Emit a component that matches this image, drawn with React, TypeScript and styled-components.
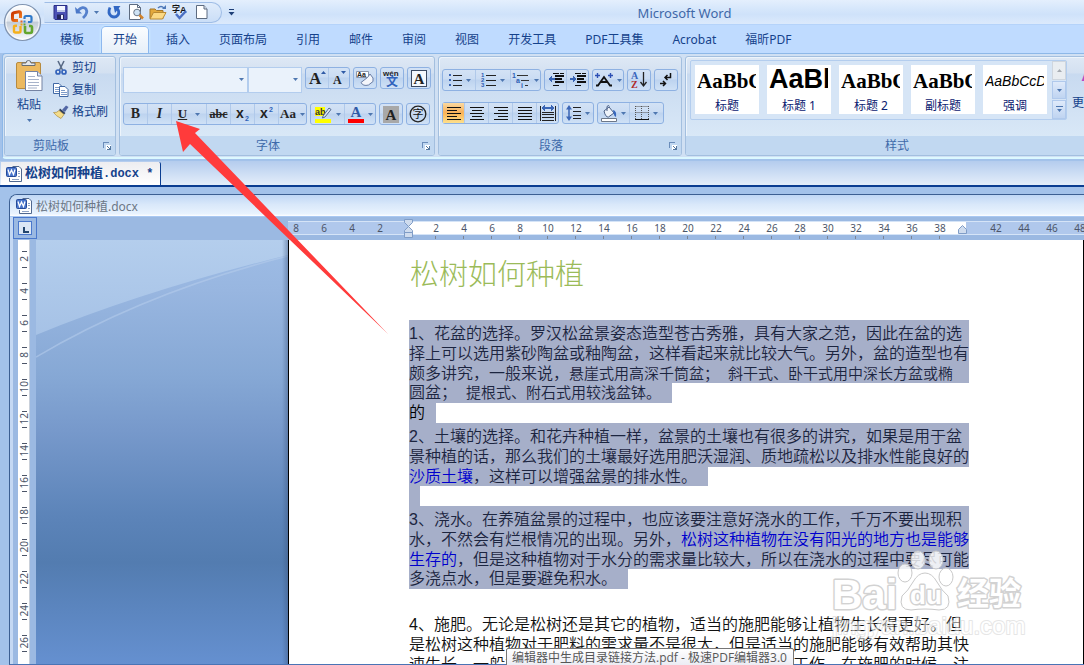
import React from 'react';
import styled, { createGlobalStyle, css } from 'styled-components';

const ui = `"Noto Sans", "Noto Sans CJK SC", sans-serif`;
const body = `"Liberation Sans", "Noto Sans CJK SC", sans-serif`;
const serif = `"Liberation Serif", "Noto Sans CJK SC", serif`;

const Global = createGlobalStyle`
  * { box-sizing: border-box; }
  body { margin: 0; font-family: ${ui}; font-size: 12px; color: #15428b; }
  button { font: inherit; color: inherit; border: 0; padding: 0; background: none; cursor: default; }
  p, h1 { margin: 0; }
  svg { display: block; flex: none; overflow: visible; }
`;

const Window = styled.div`
  position: relative;
  display: flex;
  flex-direction: column;
  height: 100vh;
  overflow: hidden;
  background: #a3c2ea;
`;

/* ---------- title bar ---------- */
const TitleBar = styled.header`
  display: flex;
  align-items: center;
  height: 25px;
  padding-left: 44px;
  background: linear-gradient(#e4effd 0, #d5e6fb 40%, #cfe2fa 60%, #dceafc 100%);
  border-bottom: 1px solid #b5d3fa;
`;
const QuickBar = styled.div`
  display: flex;
  align-items: center;
  width: 178px;
  height: 21px;
  padding-left: 8px;
  border: 1px solid #9fbde6;
  border-left-color: transparent;
  border-radius: 0 11px 11px 0;
  background: linear-gradient(#e0ecfb, #cadef7);
`;
const QuickButton = styled.button<{ $w: number }>`
  display: flex;
  width: ${(p) => p.$w}px;
  height: 18px;
  align-items: center;
`;
const Customize = styled.button`
  margin-left: 6px;
`;
const Caption = styled.div`
  flex: 1;
  padding-left: 50px;
  text-align: center;
  font-size: 13px;
  line-height: 20px;
  color: #4068a8;
  padding-top: 2px;
`;
const OfficeButton = styled.button`
  position: absolute;
  left: 2px;
  top: 2px;
`;

/* ---------- tabs ---------- */
const TabRow = styled.nav`
  display: flex;
  align-items: flex-end;
  gap: 7px;
  height: 28px;
  padding-left: 49px;
  background: #bfdbff;
`;
const Tab = styled.button<{ $on?: boolean }>`
  height: 26px;
  padding: 0 11px;
  line-height: 24px;
  white-space: nowrap;
  border-radius: 4px 4px 0 0;
  ${(p) =>
    p.$on &&
    css`
      background: linear-gradient(#fafdff, #e6eff9);
      box-shadow: 0 0 0 1px #8db8ef, 0 0 3px 1px #d8f4ff;
      clip-path: inset(-3px -3px 0 -3px);
    `}
`;

/* ---------- ribbon ---------- */
const Ribbon = styled.section`
  display: flex;
  gap: 3px;
  height: 106px;
  margin-left: 2px;
  padding: 2px 0 1px 1px;
  overflow: hidden;
  border: 1px solid #8db8e8;
  border-right: 0;
  border-bottom: 2px solid #dcf8ff;
  border-radius: 4px 0 0 4px;
  background: #d0e0f3;
`;
const GroupBox = styled.section<{ $w?: number }>`
  display: flex;
  flex-direction: column;
  flex: ${(p) => (p.$w ? `0 0 ${p.$w}px` : '1 0 442px')};
  min-width: 0;
  border: 1px solid #a3bfdf;
  border-radius: 3px;
  overflow: hidden;
  box-shadow: inset 1px 1px 0 #edf4fb;
  background: linear-gradient(#dee8f5 0, #d3e0f1 16px, #c8daf0 17px, #d9e8f7 80px);
`;
const GroupBody = styled.div`
  flex: 1;
  min-height: 0;
`;
const GroupLabel = styled.footer`
  display: flex;
  flex: none;
  align-items: center;
  height: 19px;
  padding-right: 4px;
  background: #c1d8f1;
  color: #3e6aaa;
  text-align: center;
`;
const LabelText = styled.span`
  flex: 1;
  padding-right: 6px;
  line-height: 19px;
`;

const ClipBody = styled(GroupBody)`
  display: flex;
  padding-left: 8px;
`;
const Paste = styled.button`
  display: flex;
  flex-direction: column;
  align-items: center;
  width: 32px;
  height: 70px;
  gap: 4px;
  padding-top: 3px;
  line-height: 20px;
`;
const ClipList = styled.div`
  margin-left: 8px;
`;
const ClipItem = styled.button`
  display: flex;
  align-items: center;
  gap: 3px;
  height: 22px;
  line-height: 20px;
  white-space: nowrap;
`;

const Rows = styled(GroupBody)<{ $top: number; $gap: number }>`
  display: flex;
  flex-direction: column;
  padding: ${(p) => p.$top}px 0 0 3px;
  gap: ${(p) => p.$gap}px;
`;
const Row = styled.div`
  display: flex;
  gap: 3px;
`;
const Combo = styled.label<{ $w: number }>`
  position: relative;
  width: ${(p) => p.$w}px;
  height: 26px;
  margin-right: -3px;
`;
const ComboSelect = styled.select`
  appearance: none;
  width: 100%;
  height: 100%;
  border: 1px solid #b3cdee;
  border-radius: 0;
  background: #eaf2fb;
`;
const ComboArrow = styled.span`
  position: absolute;
  right: 4px;
  top: 11px;
  pointer-events: none;
`;
const Buttons = styled.div`
  display: flex;
  height: 22px;
  border: 1px solid #8eb1e2;
  border-radius: 3px;
  background: linear-gradient(#d3e2f5 0, #cadcf3 45%, #bdd3ef 50%, #cfe1f6 100%);
`;
const Tool = styled.button<{ $w: number; $on?: boolean }>`
  display: flex;
  align-items: center;
  justify-content: center;
  gap: 4px;
  width: ${(p) => p.$w}px;
  height: 20px;
  color: #262626;
  background: ${(p) => (p.$on ? 'linear-gradient(#fbd9a0 0, #f8b25c 45%, #fbb85a 55%, #fde08c)' : 'none')};
  & + & { border-left: 1px solid #b0c9ea; }
`;
const Glyph = styled.span<{ $size: number; $italic?: boolean; $line?: string }>`
  font-family: ${serif};
  font-size: ${(p) => p.$size}px;
  line-height: 18px;
  font-weight: 700;
  font-style: ${(p) => (p.$italic ? 'italic' : 'normal')};
  text-decoration: ${(p) => p.$line ?? 'none'};
`;

/* ---------- styles gallery ---------- */
const StyleBody = styled(GroupBody)`
  display: flex;
  gap: 5px;
  padding: 3px 0 0 4px;
`;
const Gallery = styled.div`
  display: flex;
  flex: none;
  gap: 8px;
  height: 60px;
  padding: 4px 0 0 4px;
  border: 1px solid #b3cdee;
  border-radius: 2px;
  background: #d6e5f6;
`;
const Card = styled.button`
  display: flex;
  flex-direction: column;
  justify-content: space-between;
  width: 64px;
  height: 49px;
  background: #fff;
  color: #0b2070;
`;
const Sample = styled.span<{ $kind: 'serif' | 'big' | 'slant' }>`
  width: 59px;
  height: 32px;
  margin-left: 2px;
  overflow: hidden;
  text-align: left;
  white-space: nowrap;
  color: #000;
  ${(p) => p.$kind === 'serif' && css`font: 700 21px/32px ${serif};`}
  ${(p) => p.$kind === 'big' && css`font: 700 27px/28px ${body};`}
  ${(p) => p.$kind === 'slant' && css`font: italic 14px/32px ${body};`}
`;
const CardName = styled.span`
  width: 100%;
  line-height: 16px;
  text-align: center;
`;
const Scroll = styled.div`
  display: flex;
  flex-direction: column;
  gap: 1px;
  margin: -4px 0 0 -3px;
`;
const ScrollButton = styled.button<{ $off?: boolean }>`
  display: flex;
  align-items: center;
  justify-content: center;
  width: 14px;
  height: 19px;
  border: 1px solid ${(p) => (p.$off ? '#cfd6de' : '#b0c9ec')};
  background: ${(p) => (p.$off ? '#e9edf1' : 'linear-gradient(#dfeafa, #bfd4f1)')};
`;
const ChangeStyles = styled.button`
  flex: none;
  display: flex;
  flex-direction: column;
  height: 60px;
  line-height: 18px;
`;

/* ---------- file tab strip ---------- */
const FileStrip = styled.div`
  display: flex;
  align-items: flex-end;
  height: 26px;
  margin-top: 2px;
  padding-left: 1px;
  border-bottom: 2px solid #0b3d91;
  background: linear-gradient(#b4ccee, #e4eefa);
`;
const FileTab = styled.button`
  display: flex;
  align-items: center;
  gap: 2px;
  width: 160px;
  height: 23px;
  padding-left: 5px;
  border-right: 1px solid #0b3d91;
  border-radius: 0 2px 0 0;
  background: linear-gradient(#ededf0, #fff);
  font: 700 13px/20px "Liberation Mono", "Noto Sans CJK SC", monospace;
  white-space: nowrap;
`;
const Ext = styled.span`
  font-size: 12px;
`;

/* ---------- document window ---------- */
const DocWindow = styled.main`
  display: flex;
  flex: 1;
  min-height: 0;
  flex-direction: column;
  margin: 7px 0 0 9px;
  border: 1px solid #3c5f92;
  border-width: 1px 0 1px 1px;
  border-bottom-color: #4a74b5;
  border-radius: 8px 0 0 0;
  overflow: hidden;
  background: #c4d8f3;
`;
const DocTitle = styled.div`
  display: flex;
  flex: none;
  align-items: center;
  gap: 3px;
  height: 22px;
  padding-left: 6px;
  background: linear-gradient(#c0d7f5 0, #d9e8fa 45%, #e9f3fe 90%, #fff 100%);
  border-bottom: 1px solid #a9c8f2;
  color: #6b7786;
`;
const RulerRow = styled.div`
  display: flex;
  flex: none;
  height: 23px;
  margin-left: 3px;
  background: #9bb9e2;
`;
const TabStop = styled.button`
  display: flex;
  align-items: center;
  justify-content: center;
  width: 24px;
  height: 22px;
  border: 1px solid #4a78cc;
`;
const Ruler = styled.div`
  position: relative;
  display: flex;
  flex: 1;
  min-width: 0;
  margin-left: 251px;
  padding-top: 4px;
`;
const Scale = styled.div<{ $kind: 'left' | 'text' | 'right' }>`
  display: flex;
  height: 14px;
  flex: ${(p) => (p.$kind === 'right' ? '1 1 0' : p.$kind === 'left' ? '0 0 121px' : '0 0 557px')};
  min-width: 0;
  overflow: ${(p) => (p.$kind === 'text' ? 'visible' : 'hidden')};
  justify-content: ${(p) => (p.$kind === 'left' ? 'flex-end' : 'flex-start')};
  padding: ${(p) => (p.$kind === 'left' ? '0 15px 0 0' : p.$kind === 'text' ? '0 0 0 13px' : '0 0 0 16px')};
  border: solid #d5e4f7;
  border-width: 1px 0;
  background: ${(p) => (p.$kind === 'text' ? '#fff' : '#b0c8ec')};
`;
const Mark = styled.span<{ $tick?: boolean }>`
  position: relative;
  flex: 0 0 28px;
  text-align: center;
  font: 10px/12px "Noto Sans", sans-serif;
  color: #4c5568;
  ${(p) =>
    p.$tick &&
    css`
      &::after {
        content: '';
        position: absolute;
        left: 13px;
        top: 14px;
        width: 1px;
        height: 3px;
        background: #7b8494;
      }
    `}
`;
const Indent = styled.span<{ $x: number; $y: number }>`
  position: absolute;
  left: ${(p) => p.$x}px;
  top: ${(p) => p.$y}px;
`;
const Workspace = styled.div`
  display: flex;
  flex: 1;
  min-height: 0;
  margin-left: 3px;
`;
const SideRuler = styled.div`
  flex: 0 0 23px;
  overflow: hidden;
  padding: 0 6px 0 5px;
  background: #9bb9e2;
`;
const SideScale = styled.div`
  height: 100%;
  overflow: hidden;
  padding-top: 3px;
  background: #fff;
  border-right: 1px solid #c9d0da;
`;
const SideMark = styled.div`
  display: flex;
  align-items: center;
  justify-content: center;
  height: 32px;
  position: relative;
  font: 10px/12px "Noto Sans", sans-serif;
  color: #4c5568;
  &::before, &::after {
    content: '';
    position: absolute;
    left: 4px;
    width: 5px;
    height: 1px;
    background: #4c5568;
  }
  &::before { top: 8px; }
  &::after { bottom: 7px; }
`;
const Turned = styled.span`
  writing-mode: vertical-rl;
  transform: rotate(180deg);
`;
const Backdrop = styled.div`
  position: relative;
  flex: 0 0 252px;
  overflow: hidden;
  background: linear-gradient(#9ebde6 0, #98b6e0 12%, #86a8d5 32%, #7799cb 45%, #5c84b9 65%, #537cb0 76%, #6590d0 100%);
  &::after {
    content: '';
    position: absolute;
    inset: 0 0 0 auto;
    width: 6px;
    background: linear-gradient(90deg, rgba(60, 85, 125, 0), rgba(60, 85, 125, 0.45));
  }
`;
const Page = styled.article`
  position: relative;
  flex: 1;
  min-width: 0;
  overflow: hidden;
  padding: 15px 0 0 120px;
  border: solid #000;
  border-width: 0 1px;
  background: #fff;
  font-family: ${body};
  font-size: 16px;
  font-weight: 350;
`;
const Heading = styled.h1`
  padding-left: 1px;
  font-size: 29px;
  font-weight: 300;
  line-height: 40px;
  color: #9bbb59;
  margin-bottom: 25px;
`;
const Para = styled.p<{ $gap?: number; $plain?: boolean }>`
  margin-top: ${(p) => p.$gap ?? 0}px;
  color: ${(p) => (p.$plain ? '#111' : '#1c2540')};
`;
const Line = styled.span<{ $full?: boolean; $plain?: boolean }>`
  display: block;
  width: ${(p) => (p.$full ? '560px' : 'fit-content')};
  padding: 0 ${(p) => (p.$full ? 0 : 11)}px 0 0;
  height: 20px;
  line-height: 20px;
  white-space: nowrap;
  background: ${(p) => (p.$plain ? 'none' : '#a6afc9')};
  &:first-child { height: 24px; padding-top: 4px; }
  &:nth-child(3) { height: 19px; }
`;
const Tight = styled.span`
  font-size: 15px;
`;
const Blue = styled.span`
  color: #0000cd;
`;
const Black = styled.span`
  color: #000;
`;

/* ---------- overlays ---------- */
const Watermark = styled.div`
  position: absolute;
  left: 832px;
  top: 548px;
`;
const MarkText = styled.text`
  fill: #fff;
  stroke: #d2d2d2;
  stroke-width: 3px;
  stroke-linejoin: round;
  paint-order: stroke;
  font-family: ${body};
`;
const MarkLink = styled(MarkText)`
  stroke-width: 2px;
  opacity: 0.55;
`;
const Hint = styled.div`
  position: absolute;
  left: 506px;
  bottom: -3px;
  height: 20px;
  padding: 0 6px 0 5px;
  border: 1px solid #767676;
  border-radius: 2px;
  background: linear-gradient(#fff, #e9eaf2);
  font-family: "Open Sans", "Noto Sans CJK SC", sans-serif;
  line-height: 18px;
  color: #575757;
  white-space: nowrap;
`;
const Pointer = styled.svg`
  position: absolute;
  left: 176px;
  top: 121px;
  pointer-events: none;
`;

/* ---------- icons ---------- */
const Arrow = ({ c = '#4e77b0' }: { c?: string }) => (
  <svg width="5" height="3" viewBox="0 0 5 3"><path d="M0 0h5L2.5 3z" fill={c} /></svg>
);
const Launcher = () => (
  <svg width="8" height="8" viewBox="0 0 8 8" shapeRendering="crispEdges">
    <path d="M0 6V0h6v1H1v5z" fill="#6a8cba" />
    <path d="M3 3h5v5H3z" fill="#fff" />
    <path d="M4 4h1v1h1v1h1V4h1v4H4V7h2V6H5V5H4z" fill="#54779f" />
  </svg>
);
const OfficeLogo = () => (
  <svg width="40" height="40" viewBox="0 0 40 40">
    <defs>
      <linearGradient id="orb" x1="0" y1="0" x2="0" y2="1">
        <stop offset="0" stopColor="#fff" /><stop offset=".45" stopColor="#e3e8ef" />
        <stop offset=".5" stopColor="#c3ccd8" /><stop offset="1" stopColor="#fbfcfe" />
      </linearGradient>
      <linearGradient id="flame" x1="0" y1="0" x2="1" y2="1">
        <stop offset="0" stopColor="#c93400" /><stop offset="1" stopColor="#f58220" />
      </linearGradient>
    </defs>
    <circle cx="20.500" cy="20.500" r="18" fill="url(#orb)" stroke="#7f93b0" strokeWidth="1.200" />
    <circle cx="20.500" cy="20.500" r="16.500" fill="none" stroke="#fff" opacity=".8" />
    <g fill="none" strokeLinejoin="round">
      <path d="M16 18.500h-3.500q-2 0-2-2v-4q0-1.500 1.500-1.800l5-.9q1.500 0 1.500 1.500V16" stroke="url(#flame)" strokeWidth="3" />
      <path d="M22.500 17v-1.500q0-1.500 1.500-1.500h4q1.500 0 1.500 1.500V19q0 1-1 1H26" stroke="#2f79c9" strokeWidth="2.200" />
      <path d="M18.500 24v5q0 1.500-1.500 1.500h-3.500q-1.500 0-1.500-1.500v-4q0-1.200 1.500-1.200H15" stroke="#f5b01c" strokeWidth="2.400" />
      <path d="M23 24v5.500q0 1.500 1.500 1.500H28q2 0 2-2v-3.500q0-1.500-1.500-1.500H27" stroke="#63a62f" strokeWidth="2.600" />
    </g>
    <path d="M18.500 18.500h2v2h-2z" fill="#e2622a" /><path d="M21.500 18.500h2v2h-2z" fill="#3c85d0" />
    <path d="M18.500 21.500h2v2h-2z" fill="#f0a318" /><path d="M21.500 21.500h2v2h-2z" fill="#63a62f" />
  </svg>
);
const Save = () => (
  <svg width="15" height="15" viewBox="0 0 15 15">
    <path d="M1 .5h13v14H2l-1-1z" fill="#4a51b5" stroke="#2a2f86" />
    <path d="M4 1h8v6H4z" fill="#f3f6ff" /><path d="M4 5h8v2H4z" fill="#bcc7ea" />
    <path d="M4 9.500h7V14H4z" fill="#23275e" /><path d="M8 10h2v4H8z" fill="#e6e9fa" />
  </svg>
);
const Undo = () => (
  <svg width="15" height="15" viewBox="0 0 15 15">
    <path d="M3 5.500Q8 .5 11 4q2.500 4-3 9" fill="none" stroke="#5580cc" strokeWidth="2.800" />
    <path d="M0 2 7 8.500H1z" fill="#4b78c8" />
  </svg>
);
const Redo = () => (
  <svg width="15" height="15" viewBox="0 0 15 15">
    <path d="M3 2.500Q.5 8 4 11q4 2.500 7-1 2-3.500-1-6.500" fill="none" stroke="#3268c4" strokeWidth="2.800" />
    <path d="M6.500 1h7L8 8z" fill="#3268c4" />
  </svg>
);
const Preview = () => (
  <svg width="17" height="16" viewBox="0 0 17 16">
    <path d="M1.500.5h8l3 3v12h-11z" fill="#fff" stroke="#5d6b80" /><path d="M9.500.5v3h3" fill="none" stroke="#5d6b80" />
    <circle cx="9" cy="8.500" r="3.300" fill="#cfe3f5" stroke="#6b7787" />
    <path d="m11.500 11 3.500 3.500" stroke="#d2822a" strokeWidth="2.500" />
  </svg>
);
const Folder = () => (
  <svg width="18" height="15" viewBox="0 0 18 15">
    <path d="M1 4h5l1.500 1.500H14v8H1z" fill="#e3a93c" stroke="#a3762a" />
    <path d="M1 14 4.500 7.500H17L13.500 14z" fill="#fbd984" stroke="#b98a34" />
    <path d="M9 3q3-3 6 0" fill="none" stroke="#4d78b8" strokeWidth="1.400" /><path d="M13 4h4V0z" fill="#4d78b8" />
  </svg>
);
const Spell = () => (
  <svg width="17" height="16" viewBox="0 0 17 16">
    <text x="0" y="8" fontSize="8" fontWeight="700" fill="#111" fontFamily="Noto Sans CJK SC">字</text>
    <text x="8" y="9" fontSize="9" fontWeight="700" fill="#111" fontFamily="Liberation Sans">A</text>
    <path d="m4 10 3.500 4L14 7" fill="none" stroke="#4b70c4" strokeWidth="2.500" />
  </svg>
);
const NewDoc = () => (
  <svg width="12" height="14" viewBox="0 0 12 14">
    <path d="M.5.500h7.500l3 3.500v9.500H.5z" fill="#fff" stroke="#5d6b80" /><path d="M8 .5V4h3" fill="#dde5ef" stroke="#5d6b80" />
  </svg>
);
const PasteIcon = () => (
  <svg width="27" height="31" viewBox="0 0 27 31">
    <rect x=".5" y="2.500" width="24" height="26" rx="1.500" fill="#ecb95f" stroke="#b78a3e" />
    <path d="M6 5.500h13V3h-4q0-2.500-2.500-2.500T10 3H6z" fill="#e3e6ea" stroke="#666d76" />
    <path d="M9.500 11.500h12l4.500 4.500v14.500H9.500z" fill="#fff" stroke="#7583a3" />
    <path d="M21.500 11.500V16H26" fill="#dfe6f2" stroke="#7583a3" />
    <path d="M12 16.500h7M12 19.500h11M12 22.500h11M12 25.500h11M12 28h9" stroke="#a7b3ca" />
  </svg>
);
const Cut = () => (
  <svg width="16" height="16" viewBox="0 0 16 16" fill="none">
    <path d="M5 1 9.500 10M11 1 6.500 10" stroke="#5b6c87" strokeWidth="1.600" />
    <circle cx="5" cy="12" r="2" stroke="#3463bb" strokeWidth="1.700" /><circle cx="11" cy="12" r="2" stroke="#3463bb" strokeWidth="1.700" />
  </svg>
);
const Copy = () => (
  <svg width="16" height="14" viewBox="0 0 16 14" fill="#fff" stroke="#4068a5">
    <path d="M.5.500H6L8.500 3v7.500h-8z" /><path d="M2 4.500h4M2 6.500h4M2 8.500h4" stroke="#7d9bc9" />
    <path d="M6.500 3.500h5.500l3 3v7h-8.500z" /><path d="M8 7.500h4M8 9.500h6M8 11.500h6" stroke="#7d9bc9" />
  </svg>
);
const Brush = () => (
  <svg width="16" height="14" viewBox="0 0 16 14">
    <path d="m9 5 4-4.500L15.500 2 12 7z" fill="#5166a5" /><path d="m7 3.500 5.500 4.500-1.500 1.500L6 5.500z" fill="#30405f" />
    <path d="M6 5.500 11 9.500 8 13.500Q3 11 .5 7.500 4 8 6 5.500z" fill="#f4dc8a" stroke="#a98b3f" strokeWidth=".7" />
  </svg>
);
const WordIcon = () => (
  <svg width="17" height="16" viewBox="0 0 17 16">
    <path d="M6.500.5H13L15.500 3v12.500h-12V12" fill="#fff" stroke="#50688f" /><path d="M12 5.500h2M12 7.500h2M6 13.500h7M12 10.500h2" stroke="#8fa3c5" />
    <rect x=".5" y="1.500" width="10" height="9" rx="1" fill="#4a76cc" stroke="#254a98" />
    <path d="m2 3.500 1.500 5 2-4.500 2 4.500 1.500-5" fill="none" stroke="#fff" strokeWidth="1.300" />
  </svg>
);
const Eraser = () => (
  <svg width="18" height="18" viewBox="0 0 18 18">
    <path d="M.5 2.500h12v6H.5z" fill="#fff" stroke="#8a97ad" />
    <text x="1" y="8" fontSize="7" fontWeight="700" fill="#222" fontFamily="Liberation Sans">Aa</text>
    <path d="m5 13.500 6.500-5L14 5l3 4v3.500L12.500 16Q7 17.500 5 13.500z" fill="#f4f6fb" stroke="#697da5" />
  </svg>
);
const Phonetic = () => (
  <svg width="18" height="18" viewBox="0 0 18 18">
    <text x="0" y="7" fontSize="8" fontWeight="700" fill="#222" fontFamily="Liberation Sans">wén</text>
    <text x="3" y="17" fontSize="12" fontWeight="700" fill="#3163bd" fontFamily="Noto Sans CJK SC">文</text>
  </svg>
);
const BoxedA = ({ shaded }: { shaded?: boolean }) => (
  <svg width="16" height="17" viewBox="0 0 16 17">
    <rect x=".5" y=".5" width="15" height="16" fill={shaded ? '#a8a8a8' : '#f4f8fd'} stroke={shaded ? '#a8a8a8' : '#3b4a63'} />
    <text x="8" y="14" textAnchor="middle" fontSize="15" fontWeight="700" fill="#222" fontFamily="Liberation Serif">A</text>
  </svg>
);
const CircledZi = () => (
  <svg width="18" height="18" viewBox="0 0 18 18">
    <circle cx="9" cy="9" r="7.800" fill="none" stroke="#222" strokeWidth="1.300" />
    <text x="9" y="13" textAnchor="middle" fontSize="11" fill="#111" fontFamily="Noto Sans CJK SC">字</text>
  </svg>
);
const Script = ({ up }: { up?: boolean }) => (
  <svg width="14" height="14" viewBox="0 0 14 14">
    <text x="0" y="11" fontSize="14" fontWeight="700" fill="#222" fontFamily="Liberation Sans">x</text>
    <text x="9" y={up ? 5 : 14} fontSize="7" fontWeight="700" fill="#2f62b8" fontFamily="Liberation Sans">2</text>
  </svg>
);
const Highlight = () => (
  <svg width="17" height="17" viewBox="0 0 17 17">
    <path d="M0 1h10v9H0zM0 13h16v4H0z" fill="#ffff00" />
    <text x="0" y="9" fontSize="9" fontWeight="700" fill="#333" fontFamily="Liberation Sans">ab</text>
    <path d="m8 10 6-8 2 1.500-6 7.500-2.500 1z" fill="#dfe7f4" stroke="#50688f" />
  </svg>
);
const FontColor = () => (
  <svg width="16" height="17" viewBox="0 0 16 17">
    <text x="8" y="11" textAnchor="middle" fontSize="15" fontWeight="700" fill="#2f5aa6" fontFamily="Liberation Serif">A</text>
    <path d="M0 13h16v4H0z" fill="#f00" />
  </svg>
);
const Bullets = () => (
  <svg width="14" height="14" viewBox="0 0 14 14" shapeRendering="crispEdges">
    <path d="M1 1h2v2H1zM1 6h2v2H1zM1 11h2v2H1z" fill="#3a65b5" /><path d="M5 2h9v1H5zM5 7h9v1H5zM5 12h9v1H5z" fill="#222" />
  </svg>
);
const Numbers = () => (
  <svg width="15" height="16" viewBox="0 0 15 16">
    <g fontSize="6" fontWeight="700" fill="#2c5cb4" fontFamily="Liberation Sans"><text x="0" y="5">1</text><text x="0" y="10">2</text><text x="0" y="15">3</text></g>
    <path d="M5 3.500h10M5 8.500h10M5 13.500h10" stroke="#222" />
  </svg>
);
const Multi = () => (
  <svg width="18" height="17" viewBox="0 0 18 17">
    <g fontSize="7" fontWeight="700" fill="#2c5cb4" fontFamily="Liberation Sans"><text x="0" y="6">1</text><text x="4" y="11">a</text><text x="9" y="16">i</text></g>
    <path d="M5 3.500h11M9 8.500h8M13 13.500h3" stroke="#333" />
  </svg>
);
const IndentIcon = ({ right }: { right?: boolean }) => (
  <svg width="16" height="14" viewBox="0 0 16 14" shapeRendering="crispEdges">
    <path d="M5 0h6v1H5zM5 12h6v1H5zM7 2h9v2H7zM7 5h7v2H7zM7 8h9v2H7zM12 0h4v1h-4z" fill="#111" />
    <path d={right ? 'M0 5h3V3l4 3-4 3V7H0z' : 'M7 5H4V3L0 6l4 3V7h3z'} fill="#3a65b5" />
  </svg>
);
const AsianLayout = () => (
  <svg width="18" height="14" viewBox="0 0 18 14" fill="none">
    <path d="M1 12.500h2L9 4l6 8.500h2M5 9h8" stroke="#111" strokeWidth="1.800" />
    <path d="M2.500 0v5M0 2.500h5M15.500 0v5M13 2.500h5" stroke="#2c4fb4" strokeWidth="1.400" />
  </svg>
);
const Sort = () => (
  <svg width="17" height="18" viewBox="0 0 17 18">
    <text x="0" y="8" fontSize="10" fontWeight="700" fill="#3b66bd" fontFamily="Liberation Serif">A</text>
    <text x="0" y="17" fontSize="10" fontWeight="700" fill="#b02a2a" fontFamily="Liberation Serif">Z</text>
    <path d="M12.500 1v13M9.500 11l3 4 3-4" fill="none" stroke="#222" strokeWidth="1.300" />
  </svg>
);
const Marks = () => (
  <svg width="12" height="14" viewBox="0 0 12 14" fill="none" stroke="#111" strokeWidth="1.500">
    <path d="M10.500 0v4.500H5M7.500 2 5 4.500 7.500 7M0 10.500h5M3 8l2.500 2.500L3 13" />
  </svg>
);
const Align = ({ kind }: { kind: 'l' | 'c' | 'r' | 'j' }) => {
  const widths = kind === 'j' ? [14, 14, 14, 14, 14] : [14, 10, 14, 10, 14];
  return (
    <svg width="14" height="13" viewBox="0 0 14 13" shapeRendering="crispEdges">
      {widths.map((w, i) => (
        <rect key={i} x={kind === 'r' ? 14 - w : kind === 'c' ? (14 - w) / 2 : 0} y={i * 3} width={w} height="1" fill="#111" />
      ))}
    </svg>
  );
};
const Distribute = () => (
  <svg width="16" height="17" viewBox="0 0 16 17" shapeRendering="crispEdges">
    <path d="M0 1h1v15H0zM15 1h1v15h-1zM2 7h12v1H2zM2 9h12v1H2zM2 12h12v1H2zM2 15h12v1H2z" fill="#222" />
    <path d="M1 3l4-3v2h6V0l4 3-4 3V4H5v2z" fill="#3a65b5" />
  </svg>
);
const Spacing = () => (
  <svg width="15" height="16" viewBox="0 0 15 16">
    <path d="M3 3v10" stroke="#3a65b5" strokeWidth="1.500" /><path d="M0 4.500 3 0l3 4.500zM0 11.500 3 16l3-4.500z" fill="#3a65b5" />
    <path d="M7 2.500h8M7 6.500h8M7 10.500h8M7 13.500h8" stroke="#222" />
  </svg>
);
const Bucket = () => (
  <svg width="16" height="17" viewBox="0 0 16 17">
    <path d="m3 6 5-4 5 6-5.500 4q-3 .5-4.500-6z" fill="#eef3fa" stroke="#4a5f85" /><path d="M6 6V1.500q2-2 2.500 0" fill="none" stroke="#4a5f85" />
    <path d="M12 5q4 1 3 7-2-1-2.500-4z" fill="#3767bd" /><path d="M.5 13.500h15v3H.5z" fill="#fff" stroke="#6c7788" />
  </svg>
);
const Borders = () => (
  <svg width="14" height="14" viewBox="0 0 14 14">
    <path d="M.5.500h13M.5 6.500h13M.5 0v13M6.500 0v13M13.500 0v13" stroke="#555" strokeDasharray="1 1" /><path d="M0 13.500h14" stroke="#111" />
  </svg>
);

const styles: { sample: string; name: string; kind: 'serif' | 'big' | 'slant' }[] = [
  { sample: 'AaBbC', name: '标题', kind: 'serif' },
  { sample: 'AaBb', name: '标题 1', kind: 'big' },
  { sample: 'AaBbC', name: '标题 2', kind: 'serif' },
  { sample: 'AaBbC', name: '副标题', kind: 'serif' },
  { sample: 'AaBbCcD', name: '强调', kind: 'slant' },
];
const tabs = ['模板', '开始', '插入', '页面布局', '引用', '邮件', '审阅', '视图', '开发工具', 'PDF工具集', 'Acrobat', '福昕PDF'];
const evens = (from: number, to: number) => Array.from({ length: (to - from) / 2 + 1 }, (_, i) => from + i * 2);

const Group = ({ label, width, children }: { label: string; width?: number; children: React.ReactNode }) => (
  <GroupBox $w={width} aria-label={label}>
    {children}
    <GroupLabel>
      <LabelText>{label}</LabelText>
      <button aria-label={`${label}选项`}><Launcher /></button>
    </GroupLabel>
  </GroupBox>
);

export default function App() {
  return (
    <Window>
      <Global />
      <TitleBar>
        <QuickBar>
          <QuickButton $w={22} aria-label="保存"><Save /></QuickButton>
          <QuickButton $w={19} aria-label="撤销"><Undo /></QuickButton>
          <QuickButton $w={13} aria-label="撤销列表"><Arrow /></QuickButton>
          <QuickButton $w={21} aria-label="恢复"><Redo /></QuickButton>
          <QuickButton $w={21} aria-label="打印预览"><Preview /></QuickButton>
          <QuickButton $w={23} aria-label="打开"><Folder /></QuickButton>
          <QuickButton $w={24} aria-label="拼写检查"><Spell /></QuickButton>
          <QuickButton $w={16} aria-label="新建"><NewDoc /></QuickButton>
        </QuickBar>
        <Customize aria-label="自定义快速访问工具栏">
          <svg width="7" height="7" viewBox="0 0 7 7"><path d="M1 0h5v1H1zM.5 3h6l-3 3.500z" fill="#1e3f78" /></svg>
        </Customize>
        <Caption>Microsoft Word</Caption>
      </TitleBar>
      <TabRow>
        {tabs.map((t) => <Tab key={t} $on={t === '开始'}>{t}</Tab>)}
      </TabRow>
      <OfficeButton aria-label="Office"><OfficeLogo /></OfficeButton>

      <Ribbon>
        <Group label="剪贴板" width={112}>
          <ClipBody>
            <Paste><PasteIcon />粘贴<Arrow /></Paste>
            <ClipList>
              <ClipItem><Cut />剪切</ClipItem>
              <ClipItem><Copy />复制</ClipItem>
              <ClipItem><Brush />格式刷</ClipItem>
            </ClipList>
          </ClipBody>
        </Group>

        <Group label="字体" width={316}>
          <Rows $top={10} $gap={10}>
            <Row>
              <Combo $w={125}><ComboSelect aria-label="字体" /><ComboArrow><Arrow /></ComboArrow></Combo>
              <Combo $w={54}><ComboSelect aria-label="字号" /><ComboArrow><Arrow /></ComboArrow></Combo>
              <span />
              <Buttons>
                <Tool $w={22} aria-label="增大字体">
                  <svg width="17" height="16" viewBox="0 0 17 16"><text x="0" y="14" fontSize="17" fontWeight="700" fill="#222" fontFamily="Liberation Serif">A</text><path d="M12 4h5l-2.500-3z" fill="#2f5aa6" /></svg>
                </Tool>
                <Tool $w={21} aria-label="缩小字体">
                  <svg width="15" height="16" viewBox="0 0 15 16"><text x="1" y="14" fontSize="12" fontWeight="700" fill="#222" fontFamily="Liberation Serif">A</text><path d="M9 1h5l-2.500 3z" fill="#2f5aa6" /></svg>
                </Tool>
              </Buttons>
              <Buttons><Tool $w={22} aria-label="清除格式"><Eraser /></Tool></Buttons>
              <Buttons><Tool $w={22} aria-label="拼音指南"><Phonetic /></Tool></Buttons>
              <Buttons><Tool $w={22} aria-label="字符边框"><BoxedA /></Tool></Buttons>
            </Row>
            <Row>
              <Buttons>
                <Tool $w={23}><Glyph $size={14}>B</Glyph></Tool>
                <Tool $w={24}><Glyph $size={14} $italic>I</Glyph></Tool>
                <Tool $w={35}><Glyph $size={13} $line="underline">U</Glyph><span /><Arrow /></Tool>
                <Tool $w={24}><Glyph $size={12} $line="line-through">abc</Glyph></Tool>
                <Tool $w={24} aria-label="下标"><Script /></Tool>
                <Tool $w={24} aria-label="上标"><Script up /></Tool>
                <Tool $w={28}><Glyph $size={13}>Aa</Glyph><Arrow /></Tool>
              </Buttons>
              <Buttons>
                <Tool $w={33} aria-label="突出显示"><Highlight /><Arrow /></Tool>
                <Tool $w={31} aria-label="字体颜色"><FontColor /><Arrow /></Tool>
              </Buttons>
              <Buttons><Tool $w={22} aria-label="字符底纹"><BoxedA shaded /></Tool></Buttons>
              <Buttons><Tool $w={22} aria-label="带圈字符"><CircledZi /></Tool></Buttons>
            </Row>
          </Rows>
        </Group>

        <Group label="段落" width={244}>
          <Rows $top={12} $gap={11}>
            <Row>
              <Buttons>
                <Tool $w={32} aria-label="项目符号"><Bullets /><Arrow /></Tool>
                <Tool $w={35} aria-label="编号"><Numbers /><Arrow /></Tool>
                <Tool $w={30} aria-label="多级列表"><Multi /><Arrow /></Tool>
              </Buttons>
              <Buttons>
                <Tool $w={21} aria-label="减少缩进"><IndentIcon /></Tool>
                <Tool $w={22} aria-label="增加缩进"><IndentIcon right /></Tool>
              </Buttons>
              <Buttons><Tool $w={30} aria-label="中文版式"><AsianLayout /><Arrow /></Tool></Buttons>
              <Buttons><Tool $w={22} aria-label="排序"><Sort /></Tool></Buttons>
              <Buttons><Tool $w={22} aria-label="显示标记"><Marks /></Tool></Buttons>
            </Row>
            <Row>
              <Buttons>
                <Tool $w={21} $on aria-label="左对齐"><Align kind="l" /></Tool>
                <Tool $w={24} aria-label="居中"><Align kind="c" /></Tool>
                <Tool $w={24} aria-label="右对齐"><Align kind="r" /></Tool>
                <Tool $w={24} aria-label="两端对齐"><Align kind="j" /></Tool>
                <Tool $w={22} aria-label="分散对齐"><Distribute /></Tool>
              </Buttons>
              <Buttons><Tool $w={30} aria-label="行距"><Spacing /><Arrow /></Tool></Buttons>
              <Buttons>
                <Tool $w={31} aria-label="底纹"><Bucket /><Arrow /></Tool>
                <Tool $w={34} aria-label="框线"><Borders /><Arrow /></Tool>
              </Buttons>
            </Row>
          </Rows>
        </Group>

        <Group label="样式">
          <StyleBody>
            <Gallery>
              {styles.map((s) => (
                <Card key={s.name}>
                  <Sample $kind={s.kind}>{s.sample}</Sample>
                  <CardName>{s.name}</CardName>
                </Card>
              ))}
              <Scroll>
                <ScrollButton $off aria-label="上一行"><svg width="5" height="3" viewBox="0 0 5 3"><path d="M0 3h5L2.500 0z" fill="#a6abb2" /></svg></ScrollButton>
                <ScrollButton aria-label="下一行"><Arrow /></ScrollButton>
                <ScrollButton aria-label="其他"><svg width="7" height="7" viewBox="0 0 7 7"><path d="M0 0h7v1H0zM1 3h5L3.500 6z" fill="#4e77b0" /></svg></ScrollButton>
              </Scroll>
            </Gallery>
            <ChangeStyles>
              <svg width="48" height="34" viewBox="0 0 48 34"><text x="9" y="21" fontSize="28" fontWeight="700" fill="#b946c4" fontFamily="Liberation Sans">A</text></svg>
              更改样式
            </ChangeStyles>
          </StyleBody>
        </Group>
      </Ribbon>

      <FileStrip>
        <FileTab><WordIcon /><span>松树如何种植<Ext>.docx *</Ext></span></FileTab>
      </FileStrip>

      <DocWindow>
        <DocTitle><WordIcon />松树如何种植.docx</DocTitle>
        <RulerRow>
          <TabStop aria-label="制表符">
            <svg width="14" height="14" viewBox="0 0 14 14"><rect x=".5" y=".5" width="13" height="13" fill="#dce7f5" stroke="#4a78cc" /><path d="M5 6h2v4h4v2H5z" fill="#24476f" /></svg>
          </TabStop>
          <Ruler>
            <Scale $kind="left">{[8, 6, 4, 2].map((n) => <Mark key={n}>{n}</Mark>)}</Scale>
            <Scale $kind="text">{evens(2, 38).map((n) => <Mark key={n} $tick>{n}</Mark>)}</Scale>
            <Scale $kind="right">{evens(42, 48).map((n) => <Mark key={n}>{n}</Mark>)}</Scale>
            <Indent $x={116} $y={2}>
              <svg width="9" height="20" viewBox="0 0 9 20" fill="#cfdcee" stroke="#7f9cc6">
                <path d="M.5.500h8v3l-4 4-4-4zM.5 13.500v-2l4-4 4 4v2zM.5 13.500h8v5h-8z" />
              </svg>
            </Indent>
            <Indent $x={670} $y={8}>
              <svg width="9" height="9" viewBox="0 0 9 9" fill="#cfdcee" stroke="#7f9cc6"><path d="M.5 8.500v-4l4-4 4 4v4z" /></svg>
            </Indent>
          </Ruler>
        </RulerRow>
        <Workspace>
          <SideRuler>
            <SideScale>{evens(2, 28).map((n) => <SideMark key={n}><Turned>{n}</Turned></SideMark>)}</SideScale>
          </SideRuler>
          <Backdrop>
            <svg width="252" height="130" viewBox="0 0 252 130">
              <defs>
                <linearGradient id="sky" x1="0" y1="0" x2="0" y2="1">
                  <stop offset="0" stopColor="#b4ceed" /><stop offset="1" stopColor="#a6c2e6" />
                </linearGradient>
              </defs>
              <path d="M0 0h252v15Q110 50 0 95z" fill="url(#sky)" />
              <path d="M0 117Q110 52 252 16" fill="none" stroke="#b4cceb" strokeWidth="1.500" opacity=".6" />
            </svg>
          </Backdrop>
          <Page>
            <Heading>松树如何种植</Heading>
            <Para>
              <Line $full>1、花盆的选择。罗汉松盆景姿态造型苍古秀雅，具有大家之范，因此在盆的选</Line>
              <Line $full>择上可以选用紫砂陶盆或釉陶盆，这样看起来就比较大气。另外，盆的造型也有</Line>
              <Line $full>颇多讲究，一般来说，<Tight>悬崖式用高深千筒盆；</Tight>&nbsp;&nbsp;<Tight>斜干式、卧干式用中深长方盆或椭</Tight></Line>
              <Line>圆盆；&nbsp;&nbsp;<Tight>提根式、附石式用较浅盆钵。</Tight></Line>
              <Line><Black>的</Black></Line>
            </Para>
            <Para>
              <Line $full>2、土壤的选择。和花卉种植一样，盆景的土壤也有很多的讲究，如果是用于盆</Line>
              <Line $full>景种植的话，那么我们的土壤最好选用肥沃湿润、质地疏松以及排水性能良好的</Line>
              <Line><Blue>沙质土壤</Blue>，这样可以增强盆景的排水性。</Line>
              <Line />
            </Para>
            <Para>
              <Line $full>3、浇水。在养殖盆景的过程中，也应该要注意好浇水的工作，千万不要出现积</Line>
              <Line $full>水，不然会有烂根情况的出现。另外，<Blue>松树这种植物在没有阳光的地方也是能够</Blue></Line>
              <Line $full><Blue>生存的</Blue>，但是这种植物对于水分的需求量比较大，所以在浇水的过程中要尽可能</Line>
              <Line>多浇点水，但是要避免积水。</Line>
            </Para>
            <Para $gap={22} $plain>
              <Line $plain>4、施肥。无论是松树还是其它的植物，适当的施肥能够让植物生长得更好。但</Line>
              <Line $plain>是松树这种植物对于肥料的需求量不是很大，但是适当的施肥能够有效帮助其快</Line>
              <Line $plain>速生长，一般在每年的春季和秋季的时候来进行施肥的工作，在施肥的时候，注</Line>
            </Para>
          </Page>
        </Workspace>
      </DocWindow>

      <Watermark>
        <svg width="196" height="96" viewBox="0 0 196 96">
          <MarkText x="0" y="61" fontSize="42" fontWeight="700">Bai</MarkText>
          <g fill="#fff" fillOpacity=".8" stroke="#c9c9c9">
            <ellipse cx="73" cy="25" rx="7" ry="9" /><ellipse cx="86" cy="12" rx="7" ry="9" />
            <ellipse cx="104" cy="12" rx="7" ry="9" /><ellipse cx="114" cy="29" rx="7" ry="9" />
            <path d="M93 25q7 0 12 9t11 14q4 14-9 14-7-1-14-1t-14 1q-13 0-9-14 6-5 11-14t12-9z" />
          </g>
          <MarkText x="78" y="56" fontSize="26" fontWeight="700">du</MarkText>
          <MarkText x="125" y="57" fontSize="32" fontWeight="700">经验</MarkText>
          <MarkLink x="0" y="86" fontSize="24">jingyan.baidu.com</MarkLink>
        </svg>
      </Watermark>
      <Hint role="tooltip">编辑器中生成目录链接方法.pdf - 极速PDF编辑器3.0</Hint>
      <Pointer width="213" height="214" viewBox="0 0 213 214">
        <path d="M0 0 24 8 19 12 212 213 14 23 7 31z" fill="#ff3b3b" />
      </Pointer>
    </Window>
  );
}
